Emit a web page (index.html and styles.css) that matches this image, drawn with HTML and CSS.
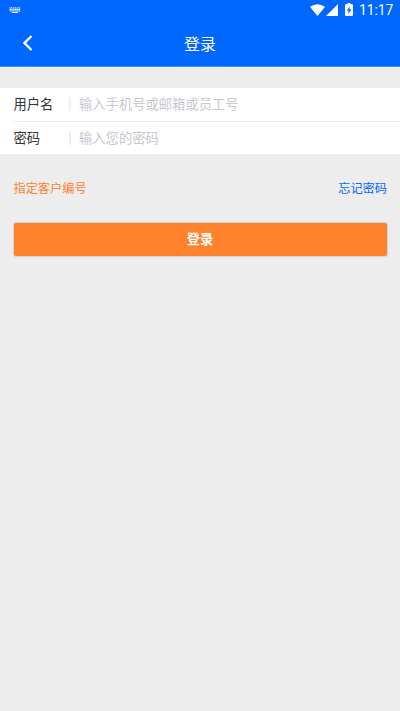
FILE: index.html
```html
<!DOCTYPE html>
<html lang="zh-CN">
<head>
<meta charset="utf-8">
<title>登录</title>
<link rel="stylesheet" href="styles.css">
</head>
<body>
<header class="top">
  <div class="status">
    <svg class="keyboard" width="12" height="8" viewBox="0 0 12 8" fill="none" stroke="#fff">
      <path d="M.5 .5h11" stroke-dasharray="1 .8" opacity=".75"/>
      <path d="M.5 2.500h11" stroke-width="2" stroke-dasharray="1.500 .3" opacity=".9"/>
      <path d="M1 4.300h10" stroke-dasharray="1 .5" opacity=".8"/>
      <path d="M3 5.500h6" opacity=".95"/>
    </svg>
    <div class="indicators">
      <svg class="wifi" width="15" height="12" viewBox="0 0 15 12" fill="#fff"><path d="M0 2.800Q7.500-2.400 15 2.800L7.500 12Z"/></svg>
      <svg class="signal" width="12" height="12" viewBox="0 0 12 12" fill="#fff"><path d="M12 0v12H0Z"/></svg>
      <svg class="battery" width="8" height="13" viewBox="0 0 8 13"><path fill="#fff" d="M2.500 0h3v1.300H7a1 1 0 0 1 1 1V12a1 1 0 0 1-1 1H1a1 1 0 0 1-1-1V2.300a1 1 0 0 1 1-1h1.500Z"/><path fill="#0067ff" d="M4.700 3.300 1.800 7.700h1.800v3.200l2.700-4.500H4.700Z"/></svg>
      <span class="clock">11:17</span>
    </div>
  </div>
  <nav class="bar">
    <svg class="back" width="10" height="16" viewBox="0 0 10 16" fill="none" stroke="#fff" stroke-width="2.400"><path d="M8.500 1 1.500 8l7 7"/></svg>
    <h1 class="title">登录</h1>
  </nav>
</header>
<main>
  <form class="fields">
    <label class="row"><span class="name">用户名</span><input class="input" type="text" placeholder="输入手机号或邮箱或员工号"></label>
    <label class="row"><span class="name">密码</span><input class="input" type="password" placeholder="输入您的密码"></label>
  </form>
  <div class="links"><a class="customer">指定客户编号</a><a class="forgot">忘记密码</a></div>
  <button class="submit" type="button">登录</button>
</main>
</body>
</html>
```
FILE: styles.css
```css
* { box-sizing: border-box; }
body {
  margin: 0;
  min-height: 711px;
  background: #ededed;
  font-family: "Noto Sans CJK SC", sans-serif;
  color: #333;
}
.top { height: 67px; background: #0067ff; border-bottom: 1px solid #4a8ff2; color: #fff; }
.status { display: flex; justify-content: space-between; height: 20px; padding: 0 7px 0 9px; }
.keyboard { margin-top: 7px; }
.indicators { display: flex; }
.wifi { margin-top: 4px; }
.signal { margin: 4px 7px 0 1px; }
.battery { margin: 3px 6px 0 0; }
.clock { font: 400 13.8px/21px Roboto, sans-serif; width: 34px; white-space: nowrap; }
.bar { display: grid; grid-template-columns: 60px 1fr 60px; align-items: center; height: 46px; }
.back { margin-left: 23px; }
.title { margin: 0; text-align: center; font-size: 16px; line-height: 24px; font-weight: 400; }
.fields { margin: 21px 0 0; padding-left: 13px; height: 66px; background: #fff; }
.row { display: flex; align-items: center; height: 32px; }
.row:first-child { height: 34px; padding-bottom: 1px; border-bottom: 1px solid #ececec; }
.name { width: 56px; padding-left: .5px; font-size: 13.3px; line-height: 20px; }
.input {
  flex: 1;
  min-width: 0;
  height: 14px;
  border: 0;
  border-left: 2px solid #efefef;
  padding: 0 0 0 8px;
  outline: 0;
  background: none;
  font: 13.3px/14px "Noto Sans CJK SC", sans-serif;
}
.input::placeholder { color: #c8c8ce; opacity: 1; }
.links { display: flex; justify-content: space-between; margin-top: 24px; padding: 0 13px 0 13.5px; font-size: 12.2px; line-height: 20px; }
.customer { color: #ff812c; }
.forgot { color: #0067ff; }
.submit {
  display: block;
  width: 373px;
  height: 33px;
  margin: 25px 13.5px 0;
  padding: 0 0 1px;
  border: 0;
  border-radius: 2px;
  background: #ff812c;
  box-shadow: 0 0 1px 1px #d5d2d0;
  color: #fff;
  font: 700 13.3px/32px "Noto Sans CJK SC", sans-serif;
}
```
